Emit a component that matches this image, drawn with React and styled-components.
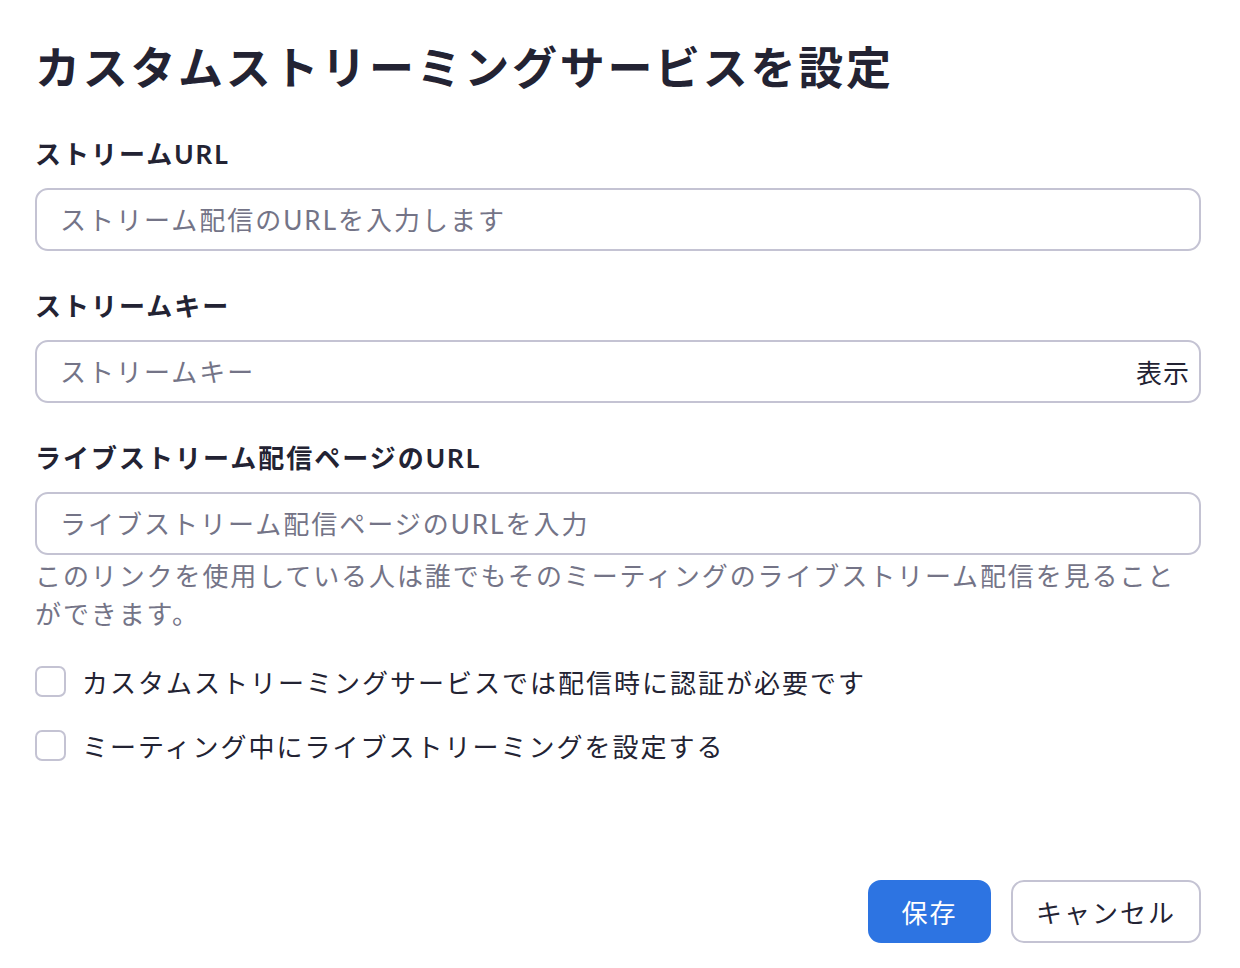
import React from "react";
import styled, { createGlobalStyle } from "styled-components";

const GlobalStyle = createGlobalStyle`
  html, body {
    margin: 0;
    padding: 0;
    background: #ffffff;
  }
  body {
    font-family: Lato, "Noto Sans CJK JP", sans-serif;
    color: #232333;
  }
  * {
    box-sizing: border-box;
  }
`;

export default function App() {
  return (
    <>
      <GlobalStyle />
      <StPage>
        <StTitle>カスタムストリーミングサービスを設定</StTitle>

        <StField>
          <StLabel>ストリームURL</StLabel>
          <StInputWrap>
            <StInput placeholder="ストリーム配信のURLを入力します" />
          </StInputWrap>
        </StField>

        <StField>
          <StLabel>ストリームキー</StLabel>
          <StInputWrap>
            <StInput type="password" placeholder="ストリームキー" />
            <StShow type="button">表示</StShow>
          </StInputWrap>
        </StField>

        <StField $last>
          <StLabel>ライブストリーム配信ページのURL</StLabel>
          <StInputWrap>
            <StInput placeholder="ライブストリーム配信ページのURLを入力" />
          </StInputWrap>
          <StHelp>
            このリンクを使用している人は誰でもそのミーティングのライブストリーム配信を見ることができます。
          </StHelp>
        </StField>

        <StChecks>
          <StCheckRow>
            <StBox type="checkbox" />
            <span>カスタムストリーミングサービスでは配信時に認証が必要です</span>
          </StCheckRow>
          <StCheckRow>
            <StBox type="checkbox" />
            <span>ミーティング中にライブストリーミングを設定する</span>
          </StCheckRow>
        </StChecks>

        <StFooter>
          <StButton $primary type="button">
            保存
          </StButton>
          <StButton type="button">キャンセル</StButton>
        </StFooter>
      </StPage>
    </>
  );
}

const StPage = styled.div`
  display: flex;
  flex-direction: column;
  width: 1240px;
  min-height: 968px;
  padding: 40px 39px 25px 35px;
`;

const StTitle = styled.h1`
  margin: 0 0 38px 0;
  font-size: 45px;
  line-height: 56px;
  font-weight: 700;
  letter-spacing: 2.7px;
  color: #232333;
`;

const StField = styled.div`
  display: flex;
  flex-direction: column;
  margin-bottom: ${(p) => (p.$last ? "0" : "35px")};
`;

const StLabel = styled.label`
  margin: 0 0 14px 0;
  font-size: 26px;
  line-height: 40px;
  font-weight: 700;
  letter-spacing: 2px;
  color: #232333;
`;

const StInputWrap = styled.div`
  display: flex;
  align-items: center;
  height: 63px;
  border: 2px solid #c4c3d3;
  border-radius: 13px;
  padding: 0 9px 0 21px;
  background: #fff;
`;

const StInput = styled.input`
  flex: 1;
  min-width: 0;
  border: none;
  outline: none;
  background: transparent;
  font-family: Lato, "Noto Sans CJK JP", sans-serif;
  font-size: 26px;
  letter-spacing: 2px;
  color: #232333;
  &::placeholder {
    color: #747487;
  }
`;

const StShow = styled.button`
  border: none;
  background: none;
  padding: 0;
  font-family: Lato, "Noto Sans CJK JP", sans-serif;
  font-size: 26px;
  letter-spacing: 1px;
  color: #232333;
  cursor: pointer;
`;

const StHelp = styled.p`
  margin: 2px 0 0 0;
  font-size: 26px;
  line-height: 38px;
  letter-spacing: 1.9px;
  color: #747487;
`;

const StChecks = styled.div`
  display: flex;
  flex-direction: column;
  gap: 24px;
  margin-top: 28px;
`;

const StCheckRow = styled.label`
  display: flex;
  align-items: center;
  gap: 16px;
  height: 40px;
  font-size: 26px;
  letter-spacing: 2px;
  color: #232333;
`;

const StBox = styled.input`
  appearance: none;
  margin: 0;
  width: 31px;
  height: 31px;
  border: 2px solid #c4c3d3;
  border-radius: 7px;
  background: #fff;
  flex-shrink: 0;
`;

const StFooter = styled.div`
  display: flex;
  justify-content: flex-end;
  gap: 20px;
  margin-top: auto;
`;

const StButton = styled.button`
  height: 63px;
  min-width: ${(p) => (p.$primary ? "123px" : "190px")};
  padding: 0 20px;
  border-radius: 13px;
  border: 2px solid ${(p) => (p.$primary ? "#2d74e2" : "#c4c3d3")};
  background: ${(p) => (p.$primary ? "#2d74e2" : "#ffffff")};
  color: ${(p) => (p.$primary ? "#ffffff" : "#232333")};
  font-family: Lato, "Noto Sans CJK JP", sans-serif;
  font-size: 26px;
  letter-spacing: 2px;
  cursor: pointer;
`;
